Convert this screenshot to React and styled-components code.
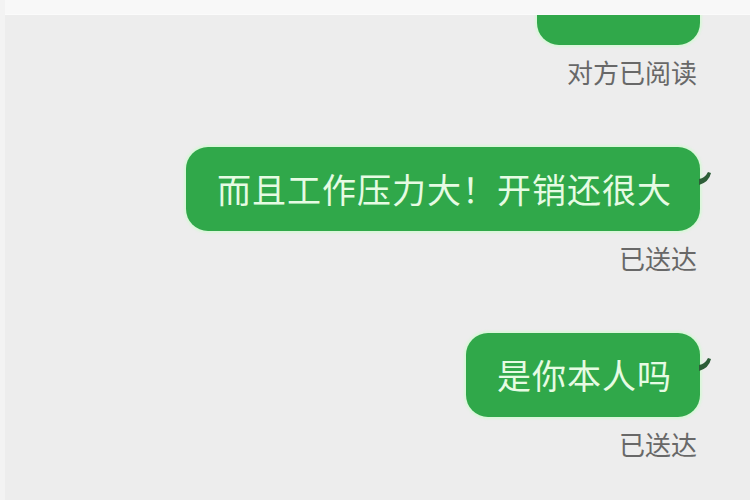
import React from "react";
import styled, { createGlobalStyle } from "styled-components";

const GlobalStyle = createGlobalStyle`
  html, body {
    margin: 0;
    padding: 0;
  }
  body {
    font-family: "Noto Sans CJK SC", "Noto Sans", sans-serif;
    background: #ededed;
  }
`;

const messages = [
  { id: 1, text: "", status: "对方已阅读", width: 163, clipped: true },
  { id: 2, text: "而且工作压力大！开销还很大", status: "已送达" },
  { id: 3, text: "是你本人吗", status: "已送达" },
];

const Screen = styled.div`
  width: 750px;
  height: 500px;
  display: flex;
  flex-direction: column;
  overflow: hidden;
  background: #ededed;
  border-left: 5px solid #f3f3f3;
  box-sizing: border-box;
`;

const TopBar = styled.div`
  height: 14px;
  flex-shrink: 0;
  background: #f8f8f8;
  border-bottom: 1px solid #fbfbfb;
  position: relative;
  z-index: 1;
`;

const ChatArea = styled.div`
  flex: 1;
  display: flex;
  flex-direction: column;
  align-items: flex-end;
  gap: 62px;
  padding-right: 50px;
  overflow: hidden;
`;

const Group = styled.div`
  display: flex;
  flex-direction: column;
  align-items: flex-end;
  margin-top: ${(p) => (p.$clipped ? "-54px" : "0")};
`;

const Bubble = styled.div`
  position: relative;
  box-sizing: border-box;
  min-height: 84px;
  width: ${(p) => (p.$width ? `${p.$width}px` : "auto")};
  padding: 0 28px 0 31px;
  display: flex;
  align-items: center;
  background: #30a84a;
  border-radius: 22px;
  box-shadow: 0 0 2px 2px rgba(200, 255, 200, 0.55);
  color: #e6fbe3;
  font-size: 34px;
  line-height: 1;
  letter-spacing: 1px;
  white-space: nowrap;
`;

const Tail = styled.svg`
  position: absolute;
  right: -13px;
  top: 23px;
  width: 14px;
  height: 16px;
`;

const Status = styled.div`
  margin-top: 14px;
  margin-right: 3px;
  font-size: 26px;
  line-height: 1;
  color: #686868;
`;

export default function App() {
  return (
    <>
      <GlobalStyle />
      <Screen>
        <TopBar />
        <ChatArea>
          {messages.map((m) => (
            <Group key={m.id} $clipped={m.clipped}>
              <Bubble $width={m.width}>
                {m.text}
                {!m.clipped && (
                  <Tail viewBox="0 0 14 16">
                    <path d="M0 9 Q6 8 9 2 L12 3 Q10 12 0 15 Z" fill="#2d5e38" />
                  </Tail>
                )}
              </Bubble>
              <Status>{m.status}</Status>
            </Group>
          ))}
        </ChatArea>
      </Screen>
    </>
  );
}
